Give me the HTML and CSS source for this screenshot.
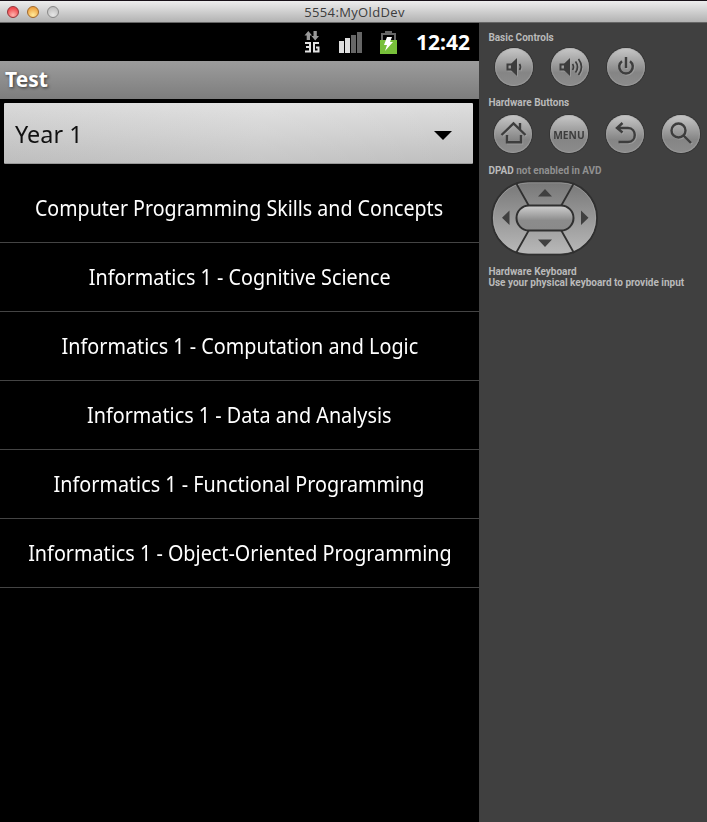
FILE: index.html
```
<!DOCTYPE html>
<html lang="en">
<head>
<meta charset="utf-8">
<title>5554:MyOldDev</title>
<link rel="stylesheet" href="styles.css">
</head>
<body>
<header class="titlebar">
  <div class="lights"><i class="light red"></i><i class="light amber"></i><i class="light grey"></i></div>
  <span class="window-title">5554:MyOldDev</span>
</header>
<div class="emulator">
  <main class="screen">
    <div class="status">
      <svg class="network" width="18" height="24" viewBox="0 0 18 24">
        <path fill="#999" d="M1.500 5.500 5.300 1l3.800 4.500H7V10H3.700V5.500zM8.500 6h2V1h3.300v5H16l-3.800 4.500z"/>
        <path fill="none" stroke="#e2e2e2" stroke-width="2" d="M2 13h5v8.500H2M3 17h4M16 13h-5v8.500h4.500v-4H13"/>
      </svg>
      <svg class="signal" width="24" height="22" viewBox="0 0 24 22">
        <path fill="#dedede" d="M0 9h5v12H0zM6 6h5v15H6z"/><path fill="#666" d="M12 3h5v18h-5zM18 0h5v21h-5z"/>
      </svg>
      <svg class="battery" width="19" height="25" viewBox="0 0 19 25">
        <path fill="none" stroke="#666" stroke-width="2" d="M3 12V4h13v8"/><path fill="#666" d="M6 1h7v3H6z"/>
        <path fill="#78c03a" d="M1 10h17v14H1z"/><path fill="#fff" d="M8 7h5l-2 5h3l-8 9 2-6H5z"/>
      </svg>
      <span class="clock">12:42</span>
    </div>
    <div class="app-title"><span>Test</span></div>
    <div class="spinner"><span>Year 1</span><svg width="18" height="9" viewBox="0 0 18 9"><path d="M0 0h18L9 9z"/></svg></div>
    <ul class="courses">
      <li><span>Computer Programming Skills and Concepts</span></li>
      <li><span>Informatics 1 - Cognitive Science</span></li>
      <li><span>Informatics 1 - Computation and Logic</span></li>
      <li><span>Informatics 1 - Data and Analysis</span></li>
      <li><span>Informatics 1 - Functional Programming</span></li>
      <li><span>Informatics 1 - Object-Oriented Programming</span></li>
    </ul>
  </main>
  <aside class="controls">
    <h2>Basic Controls</h2>
    <div class="buttons basic">
      <button aria-label="Volume down"><svg viewBox="0 0 38 38"><path class="box" d="M12.500 16.500H17l4-4v13l-4-4h-4.500z"/><path class="fill" d="m16 16 5.500-5v16L16 22z"/><path class="line" d="M24.500 16q2 3 0 6"/></svg></button>
      <button aria-label="Volume up"><svg viewBox="0 0 38 38"><path class="box" d="M9.500 16.500H14l4-4v13l-4-4H9.500z"/><path class="fill" d="m13 16 5.500-5v16L13 22z"/><path class="line" d="M21.500 16q2 3 0 6M24.500 13.500q4 5.500 0 11M27.500 11q6 8 0 16"/></svg></button>
      <button aria-label="Power"><svg viewBox="0 0 38 38"><path class="line thick" d="M15 13.200a6.800 6.800 0 1 0 8 0M19 9v11"/></svg></button>
    </div>
    <h2>Hardware Buttons</h2>
    <div class="buttons hardware">
      <button aria-label="Home"><svg viewBox="0 0 38 38"><path class="line thick" d="M7.500 20 19.500 8.500 31.500 20M26 8v6M13 20v7.300h14V20"/></svg></button>
      <button><span class="menu">MENU</span></button>
      <button aria-label="Back"><svg viewBox="0 0 38 38"><path class="line thick" d="M16.500 8 11 13l5.500 4.500M11 13h11c9 0 9 14 0 14h-9.500"/></svg></button>
      <button aria-label="Search"><svg viewBox="0 0 38 38"><circle class="line thick" cx="16.500" cy="15.500" r="7"/><path class="line thick" d="m21.500 20.500 7.500 7.500"/></svg></button>
    </div>
    <h2>DPAD <em>not enabled in AVD</em></h2>
    <svg class="dpad" width="110" height="78" viewBox="0 0 110 78">
      <defs>
        <linearGradient id="pad" x2="0" y2="1"><stop stop-color="#777"/><stop offset="1" stop-color="#b9b9b9"/></linearGradient>
        <linearGradient id="center" x2="0" y2="1"><stop stop-color="#d0d0d0"/><stop offset=".6" stop-color="#8c8c8c"/><stop offset="1" stop-color="#8a8a8a"/></linearGradient>
      </defs>
      <rect x="2" y="2.500" width="105" height="73" rx="36.500" fill="url(#pad)" stroke="#303030" stroke-width="2"/>
      <rect x="3.300" y="3.800" width="102.400" height="70.400" rx="35" fill="none" stroke="#bbb" stroke-opacity=".6" stroke-width=".8"/>
      <path fill="none" stroke="#303030" stroke-width="1.800" d="m26 4 13 23M84 4 71 27M26 74l13-23M84 74 71 51"/>
      <rect x="26.500" y="26.500" width="57" height="25" rx="12.500" fill="url(#center)" stroke="#303030" stroke-width="2"/>
      <path fill="#404040" d="m48 17.500 7-7.500 7 7.500zM48 60.500h14L55 68zM19.500 31.500V46L12 38.800zM91 31.500V46l7.500-7.200z"/>
    </svg>
    <h2>Hardware Keyboard<br>Use your physical keyboard to provide input</h2>
  </aside>
</div>
</body>
</html>
```
FILE: styles.css
```
* { box-sizing: border-box; }
body { margin: 0; width: 707px; height: 822px; overflow: hidden; background: #000; font-family: "Noto Sans", sans-serif; }
.titlebar { height: 23px; display: grid; grid-template-columns: 1fr auto 1fr; align-items: center; padding-top: 1px; background: linear-gradient(#171017 0 1px, #ededed 1px, #b2b2b2 22px, #666 22px); }
.lights { display: flex; gap: 8px; padding-left: 7px; }
.light { width: 12px; height: 12px; border-radius: 50%; border: 1px solid #888; }
.red { border-color: #943238; background: radial-gradient(circle at 50% 80%, #ffb5af, #f04c50 70%); }
.amber { border-color: #a16829; background: radial-gradient(circle at 50% 80%, #ffeb9b, #eea442 75%); }
.grey { background: radial-gradient(circle at 50% 80%, #e6e6e6, #b4b4b4); }
.window-title { color: #3c3c3c; font: 13px/20px "Open Sans", sans-serif; letter-spacing: .35px; white-space: nowrap; margin-left: 2px; }
.emulator { display: flex; height: 799px; }
.screen { width: 479px; background: #000; }
.status { height: 38px; display: flex; padding-left: 303px; }
.network { margin-top: 7px; }
.signal { margin: 9px 0 0 18px; }
.battery { margin: 7px 0 0 16px; }
.clock { color: #fff; font-size: 21px; font-weight: 700; line-height: 38px; margin-left: 18px; }
.app-title { height: 38px; background: linear-gradient(#9c9c9c, #7d7d7d); padding-left: 5px; color: #fff; font-size: 21px; font-weight: 700; line-height: 37px; text-shadow: 1px 1px 3px #333; }
.spinner span { display: inline-block; transform: scaleX(.975); transform-origin: left; }
.spinner { margin: 4px 6px 0 4px; height: 61px; display: flex; align-items: center; justify-content: space-between; padding: 0 21px 0 11px; color: #111; font-size: 24px; background: linear-gradient(100deg, #b8b8b820, #ffffff20 55%, #fff0), linear-gradient(#dedede, #bebebe); border-bottom: 1px solid #999; border-radius: 1px; }
.spinner svg { margin-top: 4px; }
.courses { list-style: none; padding: 0; margin: 10px 0 0; }
.courses li { height: 69px; padding-bottom: 2px; border-bottom: 1px solid #444; display: flex; justify-content: center; align-items: center; color: #fff; font-size: 22.5px; white-space: nowrap; }
.courses span { transform: scaleX(.879); }
.courses li:first-child span { transform: scaleX(.872); }
.controls { width: 228px; padding: 9px 0 0 9.4px; background: #404040; }
h2 { margin: 0; color: #bababa; font: 700 10px/11px Roboto, sans-serif; white-space: nowrap; }
h2 em { color: #909090; font-style: normal; }
.buttons { display: flex; gap: 18px; }
.basic { margin: 5px 0 11px 6.6px; }
.hardware { margin: 7px 0 12px 5.6px; }
button { flex: none; display: grid; place-items: center; width: 38px; height: 38px; border: 0; border-radius: 50%; padding: 0; color: #3d3d3d; background: linear-gradient(#c8c8c8, #858585 65%, #8c8c8c); box-shadow: 0 0 0 1px #353535, inset 0 0 1px 1px #aaa8; }
button svg { width: 38px; height: 38px; filter: drop-shadow(1px 1px 0 #aaa8); }
.menu { font: 700 11px "Noto Sans", sans-serif; transform: scaleX(.93); }
.fill { fill: #3d3d3d; }
.box { fill: none; stroke: #3d3d3d; stroke-width: 2; }
.line { fill: none; stroke: #3d3d3d; stroke-width: 1.7; }
.thick { stroke-width: 2.4; }
.dpad { display: block; margin: 3px 0 9px 1.6px; }
```
